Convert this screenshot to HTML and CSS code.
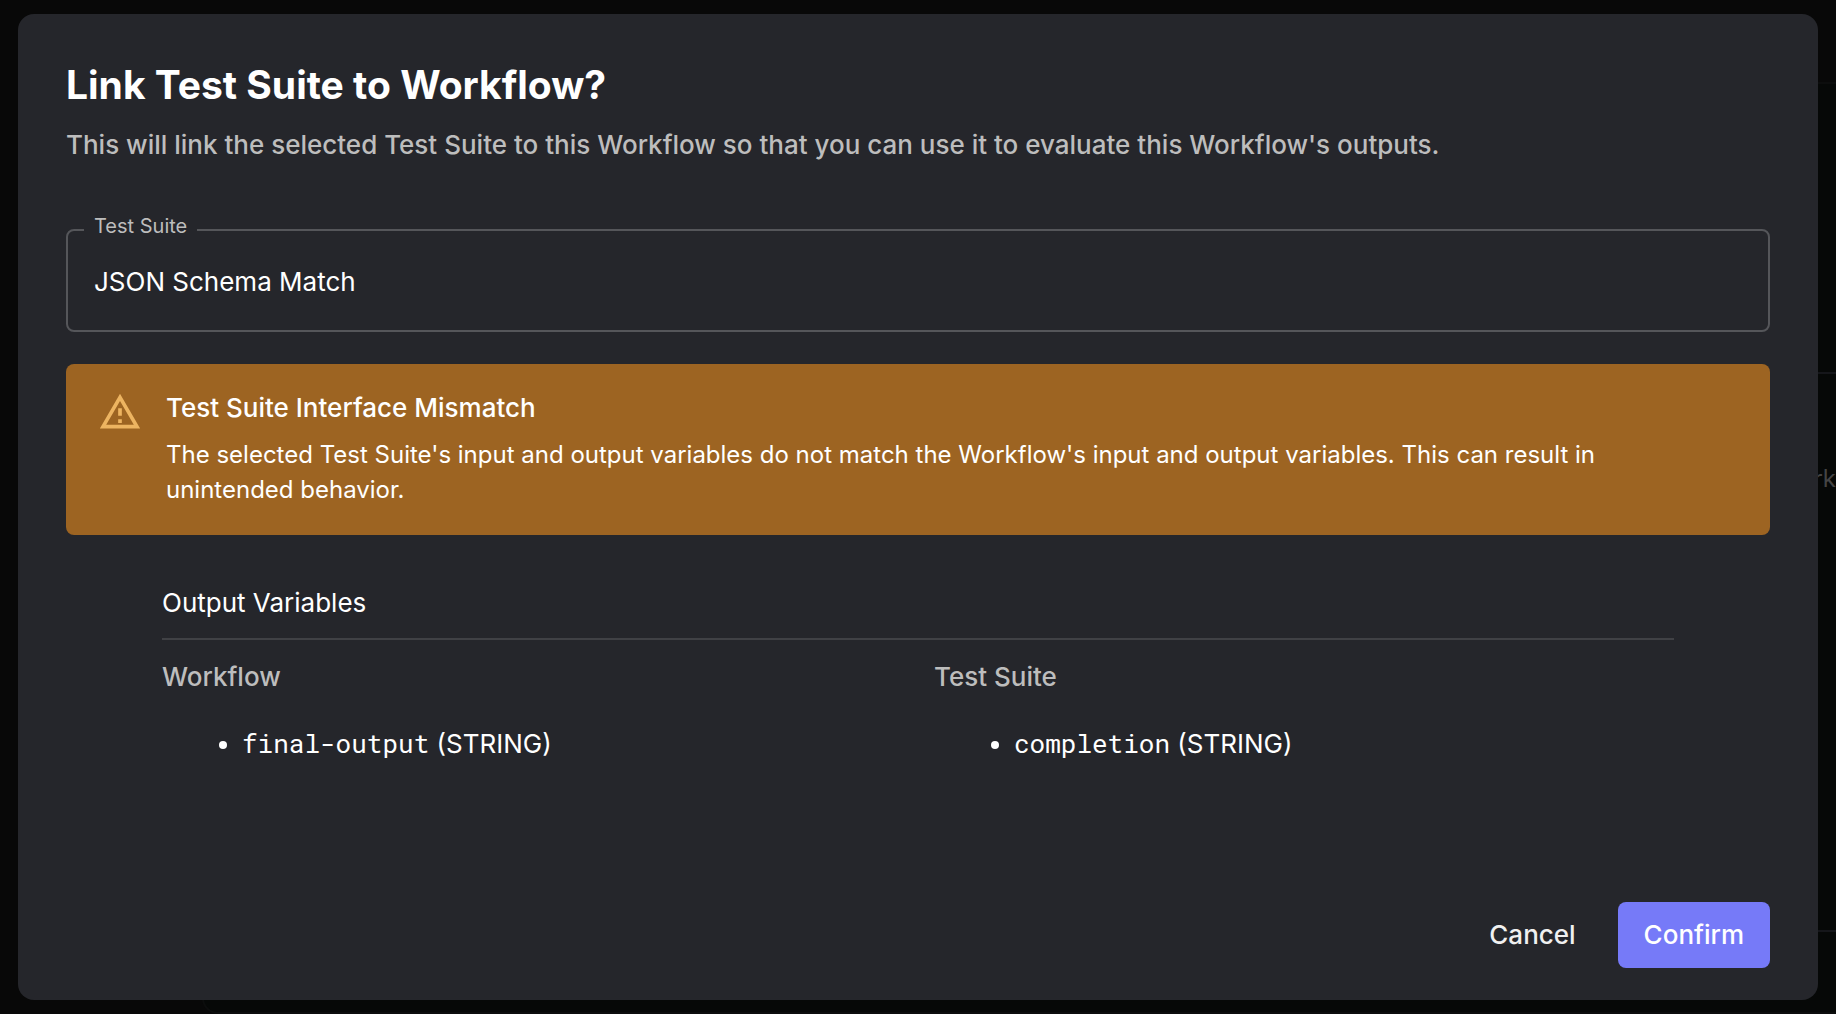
FILE: index.html
```html
<!DOCTYPE html>
<html lang="en">
<head>
<meta charset="utf-8">
<meta name="viewport" content="width=device-width, initial-scale=1">
<title>Link Test Suite to Workflow</title>
<link rel="stylesheet" href="styles.css">
</head>
<body>
<div class="backdrop" aria-hidden="true">
  <div class="panel">
    <div class="panel-row panel-head"></div>
    <div class="panel-row panel-body"><span>rk</span></div>
    <div class="panel-row"></div>
  </div>
</div>
<main class="dialog" role="dialog" aria-labelledby="dialog-title" aria-describedby="dialog-text">
  <header class="dialog-header">
    <h1 class="title" id="dialog-title">Link Test Suite to Workflow?</h1>
    <p class="subtitle" id="dialog-text">This will link the selected Test Suite to this Workflow so that you can use it to evaluate this Workflow's outputs.</p>
  </header>
  <fieldset class="field">
    <legend class="field-legend"><label for="suite">Test Suite</label></legend>
    <select class="field-select" id="suite">
      <option>JSON Schema Match</option>
    </select>
  </fieldset>
  <section class="alert" role="alert">
    <svg class="alert-icon" viewBox="0 0 24 24" aria-hidden="true">
      <path d="M12 5.99 19.53 19H4.47L12 5.99M12 2 1 21h22L12 2zm1 14h-2v2h2v-2zm0-6h-2v4h2v-4z"/>
    </svg>
    <div class="alert-content">
      <h2 class="alert-title">Test Suite Interface Mismatch</h2>
      <p class="alert-text">The selected Test Suite's input and output variables do not match the Workflow's input and output variables. This can result in unintended behavior.</p>
    </div>
  </section>
  <section class="variables">
    <h2 class="variables-title">Output Variables</h2>
    <div class="columns">
      <div class="column">
        <h3 class="column-title">Workflow</h3>
        <ul class="list"><li><code>final-output</code> (STRING)</li></ul>
      </div>
      <div class="column">
        <h3 class="column-title">Test Suite</h3>
        <ul class="list"><li><code>completion</code> (STRING)</li></ul>
      </div>
    </div>
  </section>
  <footer class="actions">
    <button class="button" type="button">Cancel</button>
    <button class="button button-primary" type="button">Confirm</button>
  </footer>
</main>
</body>
</html>
```
FILE: styles.css
```css
* {
  box-sizing: border-box;
}

body {
  margin: 0;
  min-height: 100vh;
  padding: 14px 18px;
  display: flex;
  background: #080808;
  color: #fff;
  font-family: Inter, "Liberation Sans", sans-serif;
  font-size: 26px;
  line-height: 40px;
}

h1, h2, h3, p, ul {
  margin: 0;
  padding: 0;
  font-size: inherit;
  font-weight: 400;
}

/* Dimmed page behind the dialog */
.backdrop {
  position: fixed;
  inset: 0;
  padding: 82px 0 0 202px;
  display: flex;
  overflow: hidden;
}

.panel {
  flex: 1;
  display: flex;
  flex-direction: column;
  border: 2px solid #0c0d0d;
  border-right: 0;
  border-radius: 16px 0 0 16px;
  background: #060807;
}

.panel-row {
  border-bottom: 2px solid #15161a;
}

.panel-row:last-child {
  flex: 1;
  border-bottom: 0;
}

.panel-head {
  height: 290px;
}

.panel-body {
  height: 558px;
  padding-top: 85px;
  text-align: right;
  color: #444;
  font-size: 24px;
}

/* Dialog */
.dialog {
  position: relative;
  flex: 1;
  display: flex;
  flex-direction: column;
  padding: 48px 48px 32px;
  border-radius: 16px;
  background: #25262b;
}

.title {
  font-size: 39px;
  font-weight: 700;
  line-height: 46px;
}

.subtitle {
  margin-top: 17px;
  color: #bdbdbd;
  font-weight: 500;
}

.field {
  margin: 49px 0 0;
  padding: 0;
  border: 2px solid #55565a;
  border-radius: 8px;
}

.field-legend {
  margin-left: 16px;
  padding: 0 10px 8px;
  color: #bdbdbd;
  font-size: 20px;
  line-height: 24px;
}

.field-select {
  display: block;
  width: 100%;
  height: 84px;
  padding: 0 26px 12px;
  border: 0;
  outline: 0;
  appearance: none;
  background: transparent;
  color: inherit;
  font: inherit;
}

.alert {
  display: flex;
  gap: 24px;
  margin-top: 32px;
  padding: 24px 56px 28px 32px;
  border-radius: 8px;
  background: #9d6422;
}

.alert-icon {
  flex: none;
  width: 44px;
  height: 44px;
  margin-top: 2px;
  fill: #edb461;
}

.alert-title {
  font-weight: 500;
}

.alert-text {
  margin-top: 9px;
  font-size: 24px;
  line-height: 35px;
}

.variables {
  padding: 48px 96px 0;
}

.variables-title {
  padding-bottom: 15px;
  border-bottom: 2px solid #404145;
}

.columns {
  display: grid;
  grid-template-columns: 1fr 1fr;
  gap: 32px;
  padding-top: 17px;
}

.column-title {
  color: #bdbdbd;
  font-weight: 500;
}

.list {
  margin-top: 26px;
  padding-left: 80px;
}

code {
  font-family: "Roboto Mono", "Liberation Mono", monospace;
  font-size: 26px;
}

.actions {
  display: flex;
  justify-content: flex-end;
  gap: 16px;
  margin-top: auto;
}

.button {
  height: 66px;
  padding: 0 26px;
  border: 0;
  border-radius: 8px;
  background: transparent;
  color: #f0f0f0;
  font: inherit;
  font-weight: 500;
}

.button-primary {
  background: #767af8;
  color: #fff;
}
```
